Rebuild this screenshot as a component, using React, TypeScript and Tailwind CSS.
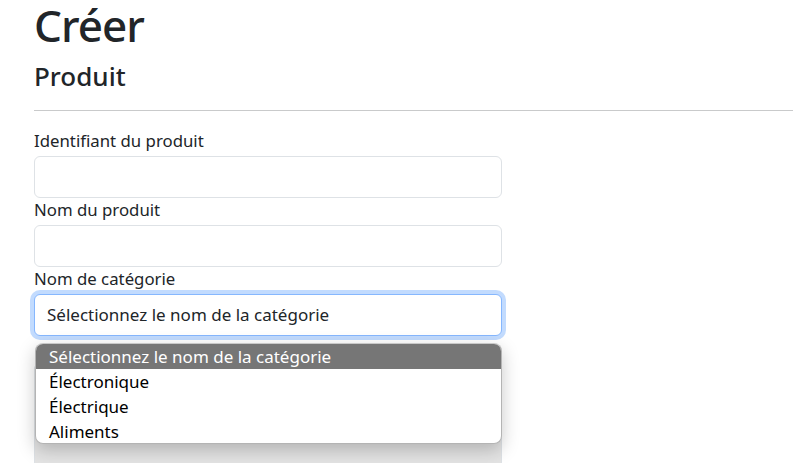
import React from "react";

const font = { fontFamily: '"Noto Sans", "Open Sans", sans-serif' };

export default function App() {
  return (
    <div className="relative w-[793px] h-[463px] overflow-hidden bg-white text-[#212529]" style={font}>
      <div className="pl-[34px]">
        <h1 className="mt-[3px] text-[44px] leading-[45px] font-medium tracking-[-1px]">Créer</h1>
        <h3 className="mt-[15px] text-[26px] leading-[26px] font-medium">Produit</h3>
        <hr className="mt-[21px] border-0 border-t border-[#c9cacb]" />
        <div className="mt-[18px] w-[468px]">
          <label className="block text-[16.8px] leading-6 mb-[3px]">Identifiant du produit</label>
          <div className="h-[42px] rounded-[6px] border border-[#dee2e6] bg-white" />
          <label className="block text-[16.8px] leading-6 mb-[3px]">Nom du produit</label>
          <div className="h-[42px] rounded-[6px] border border-[#dee2e6] bg-white" />
          <label className="block text-[16.8px] leading-6 mb-[3px]">Nom de catégorie</label>
          <div className="h-[42px] rounded-[6px] border border-[#86b7fe] bg-white ring-4 ring-[#0d6efd]/25 px-[12px] flex items-center text-[17px]">
            Sélectionnez le nom de la catégorie
          </div>
          <div className="h-[27px]" />
          <div className="h-[120px] rounded-[6px] border border-[#dee2e6] bg-[#e4e4e4]" />
        </div>
      </div>
      <div className="absolute left-[35px] top-[343px] w-[467px] h-[101px] rounded-[8px] bg-white border border-[#b4b4b4] border-t-[#c8c8c8] shadow-[0_6px_18px_rgba(0,0,0,0.22)] overflow-hidden text-[17px] text-black">
        <div className="h-[25px] leading-[25px] bg-[#767676] text-white pl-[13px]">Sélectionnez le nom de la catégorie</div>
        <div className="h-[25px] leading-[25px] pl-[13px]">Électronique</div>
        <div className="h-[25px] leading-[25px] pl-[13px]">Électrique</div>
        <div className="h-[25px] leading-[25px] pl-[13px]">Aliments</div>
      </div>
    </div>
  );
}
